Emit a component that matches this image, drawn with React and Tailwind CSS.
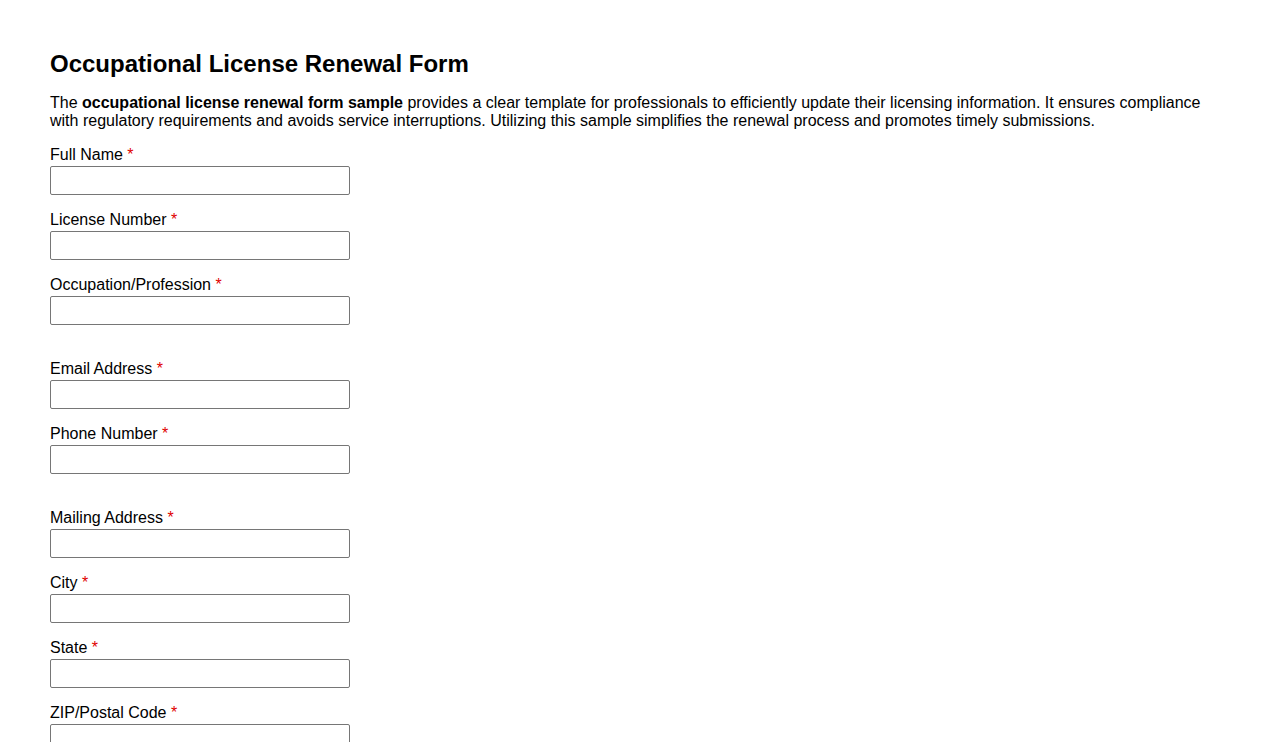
import React from "react";

function Field({ label }) {
  return (
    <div className="pb-[16px]">
      <label className="block text-[16px] leading-[18px] mb-[2px] text-black">
        {label} <span className="text-[#e00000]">*</span>
      </label>
      <input
        type="text"
        className="block w-[300px] h-[29px] border border-[#767676] rounded-[2px] bg-white outline-none px-[2px]"
      />
    </div>
  );
}

export default function App() {
  return (
    <div
      className="min-h-screen bg-white px-[50px] pt-[50px] text-black"
      style={{ fontFamily: '"Liberation Sans", Arial, sans-serif' }}
    >
      <h1 className="text-[24px] leading-[28px] font-bold">Occupational License Renewal Form</h1>
      <p className="mt-[16px] text-[16px] leading-[18.4px]">
        The <strong className="font-bold">occupational license renewal form sample</strong> provides a clear template for
        professionals to efficiently update their licensing information. It ensures compliance with regulatory
        requirements and avoids service interruptions. Utilizing this sample simplifies the renewal process and
        promotes timely submissions.
      </p>
      <form className="pt-[15px]">
        <div className="pb-[19px]">
          <Field label="Full Name" />
          <Field label="License Number" />
          <Field label="Occupation/Profession" />
        </div>
        <div className="pb-[19px]">
          <Field label="Email Address" />
          <Field label="Phone Number" />
        </div>
        <div>
          <Field label="Mailing Address" />
          <Field label="City" />
          <Field label="State" />
          <Field label="ZIP/Postal Code" />
        </div>
      </form>
    </div>
  );
}
